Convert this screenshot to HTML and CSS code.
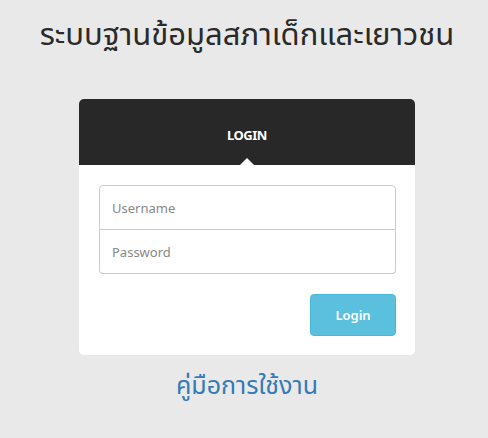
FILE: index.html
```html
<!DOCTYPE html>
<html lang="th">
<head>
<meta charset="utf-8">
<title>Login</title>
<link rel="stylesheet" href="styles.css">
</head>
<body>
<div class="page">
  <h1 class="title">ระบบฐานข้อมูลสภาเด็กและเยาวชน</h1>
  <div class="card">
    <div class="card-head"><span class="head-text">LOGIN</span><span class="arrow"></span></div>
    <div class="card-body">
      <div class="inputs">
        <input class="field field-first" type="text" placeholder="Username">
        <input class="field field-last" type="password" placeholder="Password">
      </div>
      <div class="actions"><button class="btn">Login</button></div>
    </div>
  </div>
  <a class="manual" href="#">คู่มือการใช้งาน</a>
</div>
</body>
</html>
```
FILE: styles.css
```css
html, body { margin: 0; padding: 0; }
body {
  background: #e9e9e9;
  font-family: "Noto Sans", "Noto Sans Thai", "Open Sans", sans-serif;
  color: #333;
}
.page {
  display: flex;
  flex-direction: column;
  align-items: center;
  padding: 12px 0 0 6px;
}
.title {
  margin: 0;
  font-size: 31px;
  font-weight: 400;
  line-height: 42px;
  color: #2a2a2a;
}
.card {
  margin-top: 45px;
  width: 336px;
  background: #fff;
  border-radius: 5px;
  overflow: hidden;
}
.card-head {
  position: relative;
  height: 66px;
  background: #282828;
  display: flex;
  align-items: center;
  justify-content: center;
}
.head-text {
  color: #fff;
  font-weight: 700;
  font-size: 13px;
  letter-spacing: -0.5px;
  margin-top: 6px;
}
.arrow {
  position: absolute;
  left: 161px;
  bottom: 0;
  width: 0; height: 0;
  border-left: 7px solid transparent;
  border-right: 7px solid transparent;
  border-bottom: 7px solid #fff;
}
.card-body {
  padding: 20px 19px 19px 20px;
}
.inputs {
  display: flex;
  flex-direction: column;
}
.field {
  box-sizing: border-box;
  height: 44px;
  width: 100%;
  border: 1px solid #ccc;
  padding: 0 12px;
  font-family: inherit;
  font-size: 13px;
  color: #555;
  outline: none;
  margin: 0;
}
.field::placeholder { color: #888; }
.field-first { height: 45px; border-radius: 4px 4px 0 0; }
.field-last { border-top: none; border-radius: 0 0 4px 4px; }
.actions {
  display: flex;
  justify-content: flex-end;
  margin-top: 20px;
}
.btn {
  width: 86px;
  height: 42px;
  background: #5bc0de;
  border: 1px solid #46b8da;
  border-radius: 4px;
  color: #fff;
  font-family: inherit;
  font-weight: 600;
  font-size: 13px;
}
.manual {
  margin-top: 12px;
  font-size: 25px;
  color: #337ab7;
  text-decoration: none;
  line-height: 34px;
}
```
